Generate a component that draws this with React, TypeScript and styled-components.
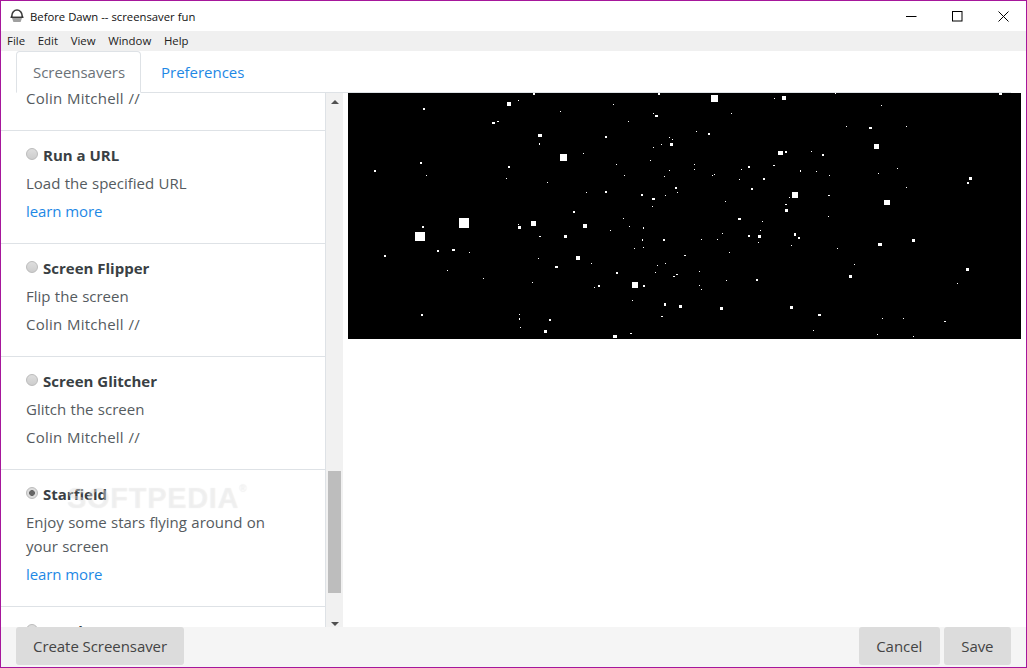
import * as React from "react"
import styled, { createGlobalStyle } from "styled-components"

const GlobalStyle = createGlobalStyle`
	html, body {
		margin: 0;
		height: 100%;
		overflow: hidden;
		background: #fff;
	}
	* {
		box-sizing: border-box;
	}
`

// x, y, w, h relative to the preview's top left corner (h defaults to w)
const STARS: number[][] = [
	[185, 0, 2], [310, 0, 2], [159, 9, 4], [170, 7, 1], [75, 15, 2], [212, 18, 1], [265, 11, 1], [305, 20, 1], [307, 22, 3, 2], [144, 29, 3, 2],
	[149, 28, 2, 1], [280, 28, 1], [190, 41, 4, 3], [191, 50, 1, 2], [257, 43, 2], [321, 44, 1], [324, 46, 1], [322, 50, 3], [313, 51, 1], [305, 54, 1],
	[212, 61, 7], [235, 60, 1], [72, 69, 2], [26, 77, 2], [78, 82, 1], [160, 73, 2], [158, 85, 1], [199, 89, 1], [268, 71, 1], [276, 82, 1],
	[302, 67, 1], [321, 77, 1], [316, 83, 1], [327, 94, 2], [329, 99, 1], [317, 102, 1], [304, 105, 3, 2], [293, 101, 2], [304, 113, 1], [257, 98, 2],
	[238, 99, 1], [225, 118, 2],
	[111, 125, 10], [67, 139, 10, 9], [74, 133, 2], [170, 131, 1], [170, 133, 3], [183, 128, 5], [235, 131, 4], [275, 125, 1], [281, 133, 1], [262, 137, 1],
	[295, 134, 1, 2], [294, 146, 1, 2], [315, 146, 2], [191, 143, 2, 1], [216, 142, 3], [89, 157, 2], [104, 156, 3, 2], [121, 159, 1], [36, 162, 2], [99, 177, 1],
	[135, 185, 1], [184, 189, 1], [190, 165, 1], [207, 173, 3, 2], [228, 163, 4], [243, 170, 1], [286, 155, 1], [295, 154, 1], [336, 162, 2, 1], [309, 172, 1],
	[317, 170, 1], [307, 179, 1], [328, 181, 2, 1], [325, 183, 2, 1], [268, 179, 2], [284, 189, 6], [295, 192, 2], [250, 192, 2], [246, 194, 1], [284, 207, 1],
	[316, 210, 2, 3], [331, 212, 3], [313, 223, 2, 1], [73, 221, 2], [171, 221, 1], [171, 225, 1, 2], [172, 234, 1], [201, 226, 2], [196, 237, 3], [265, 242, 4, 3],
	[282, 240, 2, 1],
	[363, 2, 7], [426, 5, 1], [434, 3, 4], [487, 0, 1], [651, 0, 3, 2], [533, 12, 1], [383, 20, 1], [348, 38, 1], [360, 40, 2], [498, 33, 1],
	[521, 34, 3, 2], [558, 33, 1], [526, 51, 5], [430, 58, 5, 4], [437, 58, 2], [463, 58, 1], [474, 61, 2], [346, 71, 1], [346, 76, 1], [364, 82, 1],
	[366, 81, 1], [393, 76, 1], [400, 73, 2], [425, 72, 2, 1], [452, 77, 1, 2], [468, 78, 1], [481, 82, 1], [391, 86, 1], [415, 85, 2], [530, 80, 1],
	[549, 75, 1], [621, 84, 3], [619, 89, 2], [558, 94, 1], [403, 95, 2], [444, 99, 6], [441, 104, 1], [480, 102, 2, 1], [377, 108, 1], [437, 111, 2, 1],
	[437, 116, 3], [536, 107, 6, 5],
	[390, 125, 3, 2], [414, 128, 1], [480, 123, 1], [374, 140, 1], [353, 146, 1], [369, 146, 1], [400, 142, 2], [410, 142, 3], [412, 137, 1], [410, 149, 1],
	[446, 140, 2, 3], [450, 144, 2], [443, 152, 1], [489, 155, 1], [530, 150, 4, 3], [564, 146, 3], [381, 159, 1], [506, 171, 1], [618, 175, 3], [351, 178, 1],
	[378, 187, 1], [408, 186, 2], [501, 182, 3], [609, 190, 1], [351, 192, 1], [353, 196, 1], [372, 214, 3], [442, 213, 3], [470, 221, 3, 2], [596, 228, 2, 1],
	[534, 225, 1], [555, 225, 1], [465, 237, 1], [529, 241, 1], [565, 243, 1],
]

const Radio = ({ checked }: { checked?: boolean }) => <RadioDot $checked={checked} />

const Saver = ({ name, checked, children }: { name: string; checked?: boolean; children: React.ReactNode }) => (
	<Item>
		<ItemTitle>
			<Radio checked={checked} />
			{name}
		</ItemTitle>
		{children}
	</Item>
)

export default function App() {
	return (
		<Frame>
			<GlobalStyle />
			<TitleBar>
				<svg width="14" height="14" viewBox="0 0 14 14">
					<path d="M1.8 8 V7 A5.2 6 0 0 1 12.2 7 V8" fill="none" stroke="#3c3c3c" strokeWidth="1.6" />
					<rect x="0.5" y="7.6" width="13" height="1.3" fill="#222" />
					<path d="M2 9 H12 L10.6 13 H3.4 Z" fill="#a0a0a0" />
				</svg>
				<WindowTitle>Before Dawn -- screensaver fun</WindowTitle>
				<WindowButton>
					<svg width="11" height="11" viewBox="0 0 11 11">
						<path d="M0 5.5 H10.5" stroke="#000" strokeWidth="1" />
					</svg>
				</WindowButton>
				<WindowButton>
					<svg width="11" height="11" viewBox="0 0 11 11">
						<rect x="0.5" y="0.5" width="9.5" height="9.5" fill="none" stroke="#000" strokeWidth="1" />
					</svg>
				</WindowButton>
				<WindowButton>
					<svg width="11" height="11" viewBox="0 0 11 11">
						<path d="M0.5 0.5 L10.5 10.5 M10.5 0.5 L0.5 10.5" stroke="#000" strokeWidth="1" />
					</svg>
				</WindowButton>
			</TitleBar>
			<MenuBar>
				<MenuItem>File</MenuItem>
				<MenuItem>Edit</MenuItem>
				<MenuItem>View</MenuItem>
				<MenuItem>Window</MenuItem>
				<MenuItem>Help</MenuItem>
			</MenuBar>
			<Tabs>
				<Tab $active>Screensavers</Tab>
				<Tab>Preferences</Tab>
			</Tabs>
			<Main>
				<Sidebar>
					<List>
						<FirstItem>
							<Byline>Colin Mitchell //</Byline>
						</FirstItem>
						<Saver name="Run a URL">
							<Line>Load the specified URL</Line>
							<LearnMore>learn more</LearnMore>
						</Saver>
						<Saver name="Screen Flipper">
							<Line>Flip the screen</Line>
							<Byline>Colin Mitchell //</Byline>
						</Saver>
						<Saver name="Screen Glitcher">
							<Line>Glitch the screen</Line>
							<Byline>Colin Mitchell //</Byline>
						</Saver>
						<Saver name="Starfield" checked>
							<Line>Enjoy some stars flying around on your screen</Line>
							<LearnMore>learn more</LearnMore>
						</Saver>
						<Saver name="Trunks Saver">
							<Byline>Colin Mitchell //</Byline>
						</Saver>
					</List>
					<Scrollbar>
						<ArrowUp />
						<Thumb />
						<ArrowDown />
					</Scrollbar>
				</Sidebar>
				<PreviewPane>
					<Preview>
						<svg width="673" height="246" viewBox="0 0 673 246" shapeRendering="crispEdges">
							{STARS.map(([x, y, w, h], i) => (
								<rect key={i} x={x} y={y} width={w} height={h ?? w} fill="#fff" />
							))}
						</svg>
					</Preview>
				</PreviewPane>
			</Main>
			<Footer>
				<CreateButton>Create Screensaver</CreateButton>
				<Spacer />
				<FooterButton>Cancel</FooterButton>
				<FooterButton>Save</FooterButton>
			</Footer>
			<Watermark>
				SOFTPEDIA<sup>®</sup>
			</Watermark>
		</Frame>
	)
}

const Frame = styled.div`
	position: relative;
	display: flex;
	flex-direction: column;
	width: 1027px;
	height: 668px;
	border: 1px solid #a6179b;
	background: #fff;
	font-family: "Open Sans", "Liberation Sans", sans-serif;
	overflow: hidden;
`

const TitleBar = styled.div`
	display: flex;
	align-items: center;
	flex: none;
	height: 30px;
	padding-left: 9px;
	background: #fff;

	& > svg {
		margin-top: -1px;
	}
`

const WindowTitle = styled.div`
	flex: 1;
	margin-left: 6px;
	font-size: 11.3px;
	color: #111;
`

const WindowButton = styled.div`
	display: flex;
	align-items: center;
	justify-content: center;
	width: 46px;
	height: 30px;
`

const MenuBar = styled.div`
	display: flex;
	align-items: center;
	flex: none;
	gap: 12.7px;
	height: 20px;
	padding: 0 0 1px 6px;
	background: #f0f0f0;
`

const MenuItem = styled.div`
	font-size: 11.4px;
	color: #222;
`

const Tabs = styled.div`
	display: flex;
	flex: none;
	height: 42px;
	margin: 0 15px;
	border-bottom: 1px solid #dee2e6;
`

const Tab = styled.div<{ $active?: boolean }>`
	display: flex;
	align-items: center;
	height: 42px;
	padding: 0 15px 0 16px;
	margin-right: 3px;
	font-size: 15px;
	letter-spacing: -0.02px;
	color: ${(p) => (p.$active ? "#6b7278" : "#1e88e5")};
	background: ${(p) => (p.$active ? "#fff" : "transparent")};
	border: 1px solid ${(p) => (p.$active ? "#dee2e6" : "transparent")};
	border-bottom-color: ${(p) => (p.$active ? "#fff" : "transparent")};
	border-radius: 4px 4px 0 0;
`

const Main = styled.div`
	display: flex;
	flex: 1;
	min-height: 0;
`

const Sidebar = styled.div`
	display: flex;
	flex: none;
	width: 342px;
`

const List = styled.div`
	flex: none;
	width: 325px;
	height: 100%;
	overflow: hidden;
	border-right: 1px solid #dee2e6;
	font-size: 15px;
	line-height: 24px;
	color: #555b60;
`

const Item = styled.div`
	padding: 12px 45px 20px 25px;
	border-bottom: 1px solid #dee2e6;

	& > * + * {
		margin-top: 4px;
	}
`

const FirstItem = styled(Item)`
	padding-top: 0;
	margin-top: -7px;
`

const ItemTitle = styled.div`
	display: flex;
	align-items: center;
	font-weight: 700;
	color: #3a3f44;
`

const RadioDot = styled.span<{ $checked?: boolean }>`
	flex: none;
	width: 12px;
	height: 12px;
	margin: -2px 5px 0 0;
	border-radius: 50%;
	border: 1px solid #bbb;
	background: ${(p) =>
		p.$checked ? "radial-gradient(circle, #666 0 2.6px, #dcdcdc 3.2px)" : "linear-gradient(#dedede, #cdcdcd)"};
`

const Line = styled.div`
	word-spacing: 0.45px;
`

const Byline = styled.div`
	letter-spacing: 0.22px;
	word-spacing: 0.6px;
`

const LearnMore = styled.div`
	color: #1e88e5;
	letter-spacing: -0.08px;
`

const Scrollbar = styled.div`
	display: flex;
	flex-direction: column;
	align-items: center;
	flex: none;
	width: 17px;
	height: 100%;
	background: #f1f1f1;
`

const ArrowUp = styled.div`
	flex: none;
	width: 0;
	height: 0;
	margin-top: 7px;
	border-left: 4px solid transparent;
	border-right: 4px solid transparent;
	border-bottom: 4px solid #505050;
`

const Thumb = styled.div`
	flex: none;
	width: 13px;
	height: 122px;
	margin-top: 367px;
	background: #bdbdbd;
`

const ArrowDown = styled.div`
	flex: none;
	width: 0;
	height: 0;
	margin-top: 29px;
	border-left: 4px solid transparent;
	border-right: 4px solid transparent;
	border-top: 4px solid #505050;
`

const PreviewPane = styled.div`
	flex: 1;
	padding-left: 5px;
`

const Preview = styled.div`
	width: 673px;
	height: 246px;
	background: #000;

	svg {
		display: block;
	}
`

const Footer = styled.div`
	position: relative;
	display: flex;
	flex: none;
	gap: 4px;
	height: 40px;
	padding: 0 15px;
	background: #f5f5f5;
`

const FooterButton = styled.div`
	display: flex;
	align-items: center;
	height: 38px;
	padding: 0 17.5px;
	border-radius: 3px;
	background: #dcdcdc;
	font-size: 15px;
	letter-spacing: -0.06px;
	color: #444;
`

const CreateButton = styled(FooterButton)`
	padding: 0 17px;
`

const Spacer = styled.div`
	flex: 1;
`

const Watermark = styled.div`
	position: absolute;
	left: 66px;
	top: 480px;
	font-family: "Liberation Sans", sans-serif;
	font-size: 29px;
	font-weight: 700;
	letter-spacing: 0.7px;
	line-height: 34px;
	color: rgba(255, 255, 255, 0.4);
	text-shadow: 0 0 1px rgba(0, 0, 0, 0.1);
	pointer-events: none;

	sup {
		font-size: 10px;
		vertical-align: 16px;
		line-height: 0;
	}
`
